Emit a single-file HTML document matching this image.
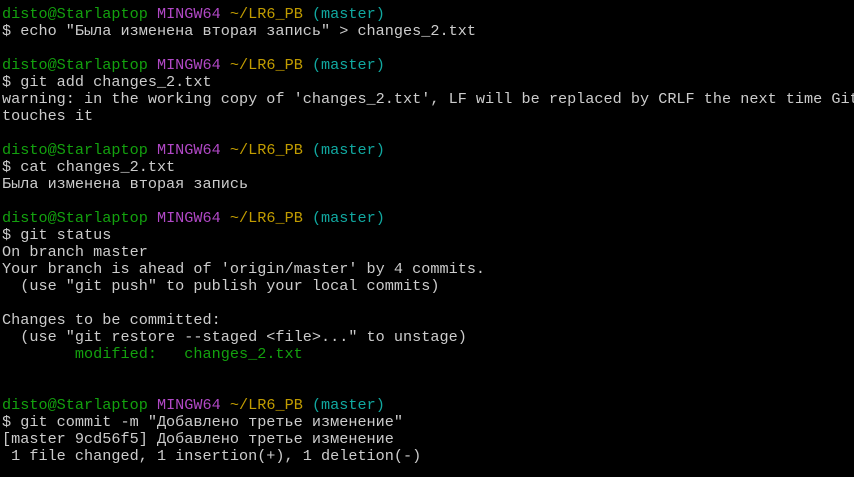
<!DOCTYPE html>
<html><head><meta charset="utf-8"><style>
html,body{margin:0;padding:0;background:#000000;width:854px;height:477px;overflow:hidden}
pre{margin:0;position:absolute;left:2px;top:6px;font-family:"Liberation Mono","DejaVu Sans Mono",monospace;font-size:15.2px;line-height:17px;color:#cccccc;white-space:pre}
.g{color:#13a10e}.m{color:#b148c6}.y{color:#c19c00}.c{color:#11a8a0}
</style></head><body><pre><span class="g">disto@Starlaptop</span> <span class="m">MINGW64</span> <span class="y">~/LR6_PB</span> <span class="c">(master)</span>
$ echo "Была изменена вторая запись" &gt; changes_2.txt

<span class="g">disto@Starlaptop</span> <span class="m">MINGW64</span> <span class="y">~/LR6_PB</span> <span class="c">(master)</span>
$ git add changes_2.txt
warning: in the working copy of 'changes_2.txt', LF will be replaced by CRLF the next time Git
touches it

<span class="g">disto@Starlaptop</span> <span class="m">MINGW64</span> <span class="y">~/LR6_PB</span> <span class="c">(master)</span>
$ cat changes_2.txt
Была изменена вторая запись

<span class="g">disto@Starlaptop</span> <span class="m">MINGW64</span> <span class="y">~/LR6_PB</span> <span class="c">(master)</span>
$ git status
On branch master
Your branch is ahead of 'origin/master' by 4 commits.
  (use "git push" to publish your local commits)

Changes to be committed:
  (use "git restore --staged &lt;file&gt;..." to unstage)
        <span class="g">modified:   changes_2.txt</span>


<span class="g">disto@Starlaptop</span> <span class="m">MINGW64</span> <span class="y">~/LR6_PB</span> <span class="c">(master)</span>
$ git commit -m "Добавлено третье изменение"
[master 9cd56f5] Добавлено третье изменение
 1 file changed, 1 insertion(+), 1 deletion(-)
</pre></body></html>
